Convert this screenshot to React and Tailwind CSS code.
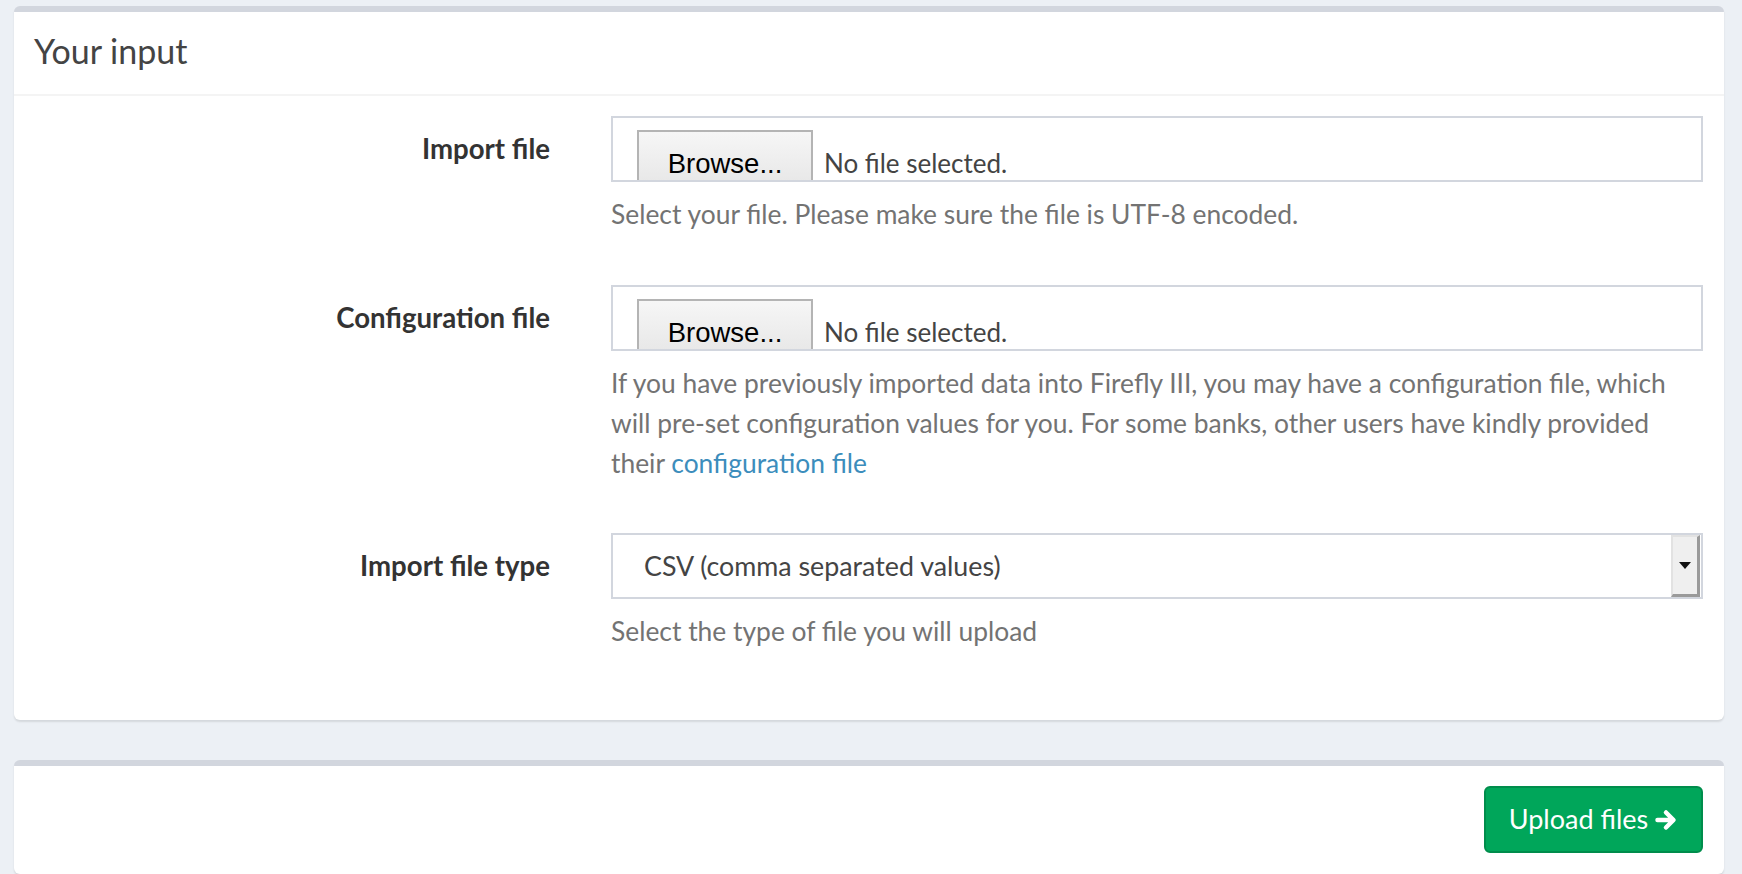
import React from "react";

const FONT = { fontFamily: "Lato, 'Noto Sans', sans-serif" };

function FileField() {
  return (
    <div className="h-[66px] border-2 border-[#d2d6de] overflow-hidden flex items-start">
      <div className="mt-[12px] ml-[24px] w-[176px] h-[68px] shrink-0 border-2 border-[#b4b4b4] bg-gradient-to-b from-[#f6f6f6] to-[#e4e4e4] flex items-center justify-center text-[27.5px] text-black" style={{ fontFamily: "'Liberation Sans', Arial, sans-serif" }}>
        Browse...
      </div>
      <div className="mt-[12px] h-[66px] flex items-center ml-[11px] text-[26px] text-[#444]">No file selected.</div>
    </div>
  );
}

function Row({ label, children, help }) {
  return (
    <div className="flex pr-[21px]">
      <div className="w-[536px] shrink-0 h-[66px] flex items-center justify-end text-[27.6px] font-bold text-[#333]">
        {label}
      </div>
      <div className="ml-[61px] flex-1">
        {children}
        <div className="mt-[12px] text-[26.4px] leading-[40px] text-[#737373]">{help}</div>
      </div>
    </div>
  );
}

export default function App() {
  return (
    <div className="min-h-screen bg-[#ecf0f5] pt-[6px] pl-[14px] pr-[18px]" style={FONT}>
      {/* Input card */}
      <div className="bg-white rounded-[6px] border-t-[6px] border-[#d2d6de] shadow-[0_2px_2px_rgba(0,0,0,0.1)]">
        <div className="h-[84px] border-b-2 border-[#f4f4f4] flex items-center pl-[20px] pb-[6px]">
          <h3 className="text-[34px] text-[#444]">Your input</h3>
        </div>
        <div className="pt-[20px] pb-[69px]">
          <Row label="Import file" help="Select your file. Please make sure the file is UTF-8 encoded.">
            <FileField />
          </Row>
          <div className="mt-[51px]">
            <Row
              label="Configuration file"
              help={
                <>
                  If you have previously imported data into Firefly III, you may have a configuration file, which will
                  pre-set configuration values for you. For some banks, other users have kindly provided their{" "}
                  <a href="#" className="text-[#3c8dbc]">configuration file</a>
                </>
              }
            >
              <FileField />
            </Row>
          </div>
          <div className="mt-[50px]">
            <Row label="Import file type" help="Select the type of file you will upload">
              <div className="h-[66px] border-2 border-[#d2d6de] flex items-center">
                <span className="flex-1 pl-[31px] text-[26.8px] text-[#444]">CSV (comma separated values)</span>
                <div className="w-[29px] h-[62px] mr-[1px] bg-[#efefef] border-t-2 border-l-2 border-[#e2e2e2] border-r-[3px] border-b-[3px] border-r-[#9a9a9a] border-b-[#9a9a9a] flex items-center justify-center">
                  <svg width="12" height="7" viewBox="0 0 12 7">
                    <path d="M0 0h12L6 7z" fill="#111" />
                  </svg>
                </div>
              </div>
            </Row>
          </div>
        </div>
      </div>

      {/* Actions card */}
      <div className="mt-[40px] bg-white rounded-[6px] border-t-[6px] border-[#d2d6de] shadow-[0_2px_2px_rgba(0,0,0,0.1)] pt-[20px] pb-[21px] pr-[21px] flex justify-end">
        <button className="h-[67px] w-[219px] rounded-[6px] bg-[#00a65a] border-2 border-[#008d4c] text-white text-[27px] flex items-center justify-center gap-[6px]">
          Upload files
          <svg width="24" height="24" viewBox="0 0 24 24" fill="none">
            <path d="M3.5 12h15M12 4.5l7.5 7.5-7.5 7.5" stroke="white" strokeWidth="4.5" strokeLinecap="round" strokeLinejoin="round" />
          </svg>
        </button>
      </div>
    </div>
  );
}
